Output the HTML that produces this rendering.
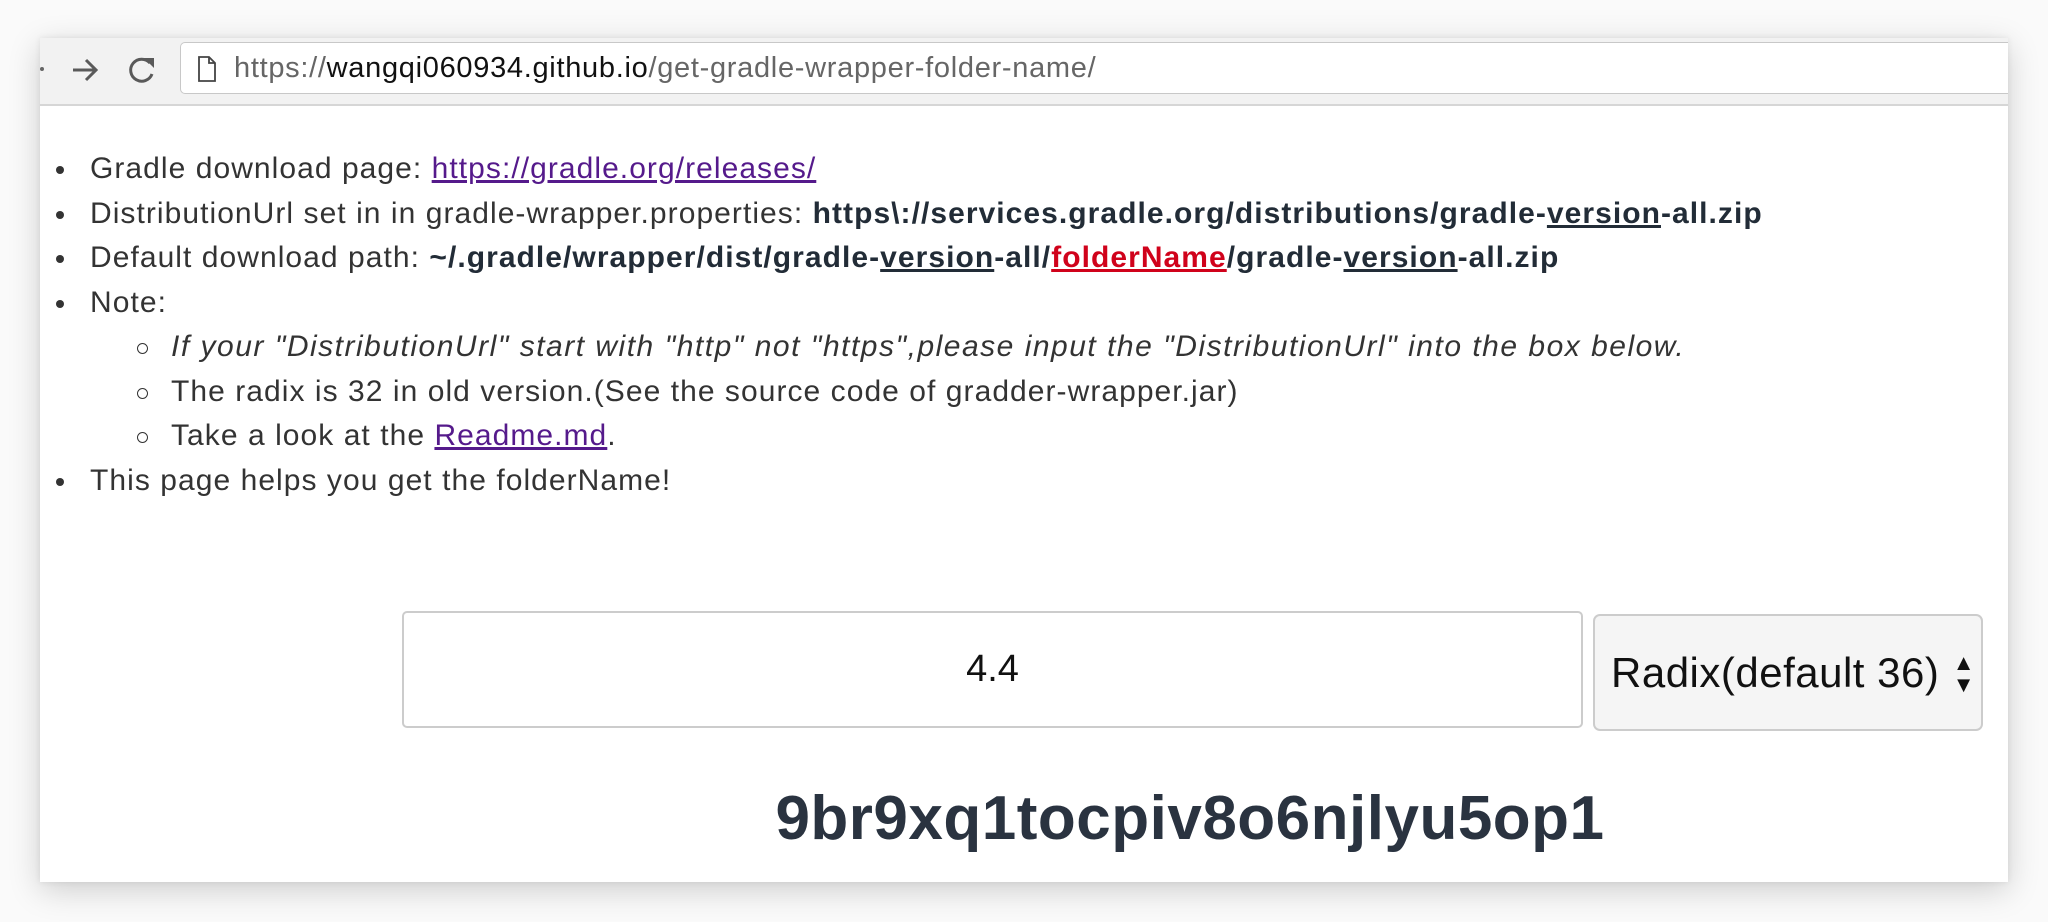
<!DOCTYPE html>
<html><head><meta charset="utf-8"><style>
*{box-sizing:border-box;margin:0;padding:0}
body{width:2048px;height:922px;background:#fafafa;position:relative;overflow:hidden;font-family:"Liberation Sans",sans-serif}
.win{position:absolute;left:40px;top:38px;width:1968px;height:844px;background:#fff;box-shadow:0 8px 30px rgba(0,0,0,.18),0 0 6px rgba(0,0,0,.08)}
.tb{position:absolute;left:0;top:0;width:100%;height:68px;background:#f2f2f2;border-bottom:2px solid #d6d6d6}
.addr{position:absolute;left:140px;top:4px;right:0;height:52px;background:#fff;border:1.5px solid #c8c8c8;border-right:none;border-radius:5px 0 0 5px}
.url{position:absolute;left:53px;top:9px;font-size:29px;color:#666;letter-spacing:.7px}
.url b{font-weight:normal;color:#111}
ul{position:absolute;left:50px;top:147px;font-size:30px;color:#333;line-height:44.5px;list-style:none;letter-spacing:1.05px}
li{position:relative;padding-left:40px;white-space:nowrap}
li:before{content:"";position:absolute;left:6px;top:19px;width:8px;height:8px;border-radius:50%;background:#333}
ul ul{position:static;padding-left:41px}
ul ul li:before{background:none;border:1.6px solid #333;width:9px;height:9px;top:18px}
i{letter-spacing:1.5px}
a{color:#551a8b;text-decoration:underline}
strong{color:#222c37}
.u{text-decoration:underline}
.r{color:#d0021b;text-decoration:underline}
.inp{position:absolute;left:402px;top:611px;width:1181px;height:117px;border:2px solid #ccc;border-radius:5px;text-align:center;font-size:38px;line-height:113px;color:#111}
.sel{position:absolute;left:1593px;top:614px;width:390px;height:117px;border:2px solid #ccc;border-radius:7px;background:#f5f5f5;font-size:42px;line-height:113px;color:#111;padding-left:16px;letter-spacing:.5px}
.res{position:absolute;left:166px;width:2048px;top:783px;text-align:center;font-size:62px;font-weight:bold;color:#2a3340;letter-spacing:.5px}
</style></head><body>
<div class="win">
<div class="tb">
<div style="position:absolute;left:0;top:29px;width:4px;height:4px;border-radius:50%;background:#666"></div>
<svg style="position:absolute;left:30px;top:18px" width="30" height="28" viewBox="0 0 30 28"><path d="M3 14H26M16 4L26 14L16 24" fill="none" stroke="#5a5a5a" stroke-width="3"/></svg>
<svg style="position:absolute;left:87px;top:16px" width="30" height="32" viewBox="0 0 30 32"><path d="M23 9A11 11 0 1 0 25 20" fill="none" stroke="#5a5a5a" stroke-width="3"/><path d="M17 4L27 4L27 14Z" fill="#5a5a5a"/></svg>
<div class="addr">
<svg style="position:absolute;left:17px;top:13px" width="18" height="26" viewBox="0 0 18 26"><path d="M1 1H11L17 7V25H1Z M11 1V7H17" fill="none" stroke="#444" stroke-width="1.8"/></svg>
<div class="url">https://<b>wangqi060934.github.io</b>/get-gradle-wrapper-folder-name/</div>
</div>
</div>
</div>
<ul>
<li>Gradle download page: <a>https://gradle.org/releases/</a></li>
<li>DistributionUrl set in in gradle-wrapper.properties: <strong>https\://services.gradle.org/distributions/gradle-<span class="u">version</span>-all.zip</strong></li>
<li>Default download path: <strong>~/.gradle/wrapper/dist/gradle-<span class="u">version</span>-all/<span class="r">folderName</span>/gradle-<span class="u">version</span>-all.zip</strong></li>
<li>Note:
<ul>
<li><i>If your "DistributionUrl" start with "http" not "https",please input the "DistributionUrl" into the box below.</i></li>
<li>The radix is 32 in old version.(See the source code of gradder-wrapper.jar)</li>
<li>Take a look at the <a>Readme.md</a>.</li>
</ul></li>
<li>This page helps you get the folderName!</li>
</ul>
<div class="inp">4.4</div>
<div class="sel">Radix(default 36)<span style="position:absolute;right:6px;top:0;font-size:22px;line-height:22px;padding-top:36px">▲<br>▼</span></div>
<div class="res">9br9xq1tocpiv8o6njlyu5op1</div>
</body></html>
